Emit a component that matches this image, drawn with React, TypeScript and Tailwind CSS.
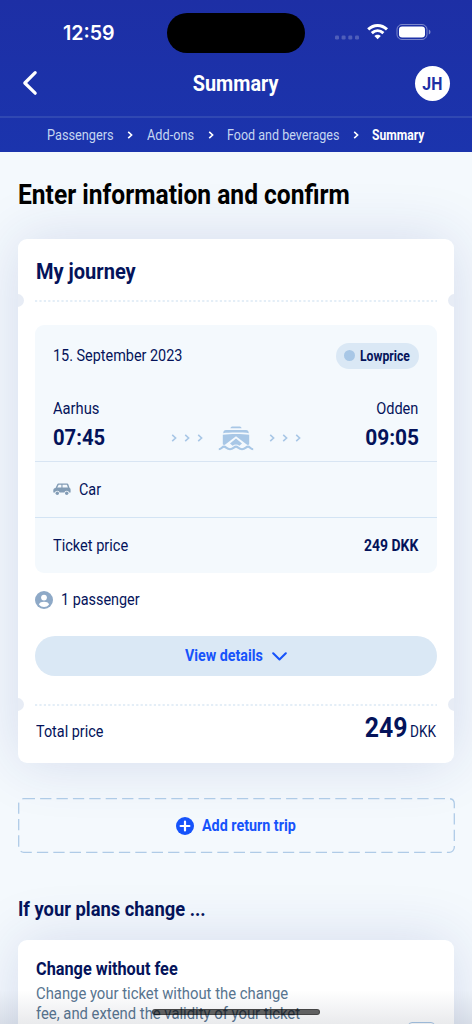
import type { ReactNode } from 'react';

// Thin chevron used between breadcrumb steps and along the route
function Caret({ className = '' }: { className?: string }) {
  return (
    <svg className={className} width="6" height="8" viewBox="0 0 6 8" fill="none" stroke="currentColor" strokeWidth="1.6">
      <path d="M1.2 0.9L4.6 4L1.2 7.1" />
    </svg>
  );
}

function Carets() {
  return (
    <div className="flex gap-[7px] text-[#a8c7e6]">
      <Caret />
      <Caret />
      <Caret />
    </div>
  );
}

function Ferry() {
  return (
    <svg width="36" height="25" viewBox="0 0 36 25" fill="#a8c7e6">
      <path d="M12.4 2.2C13 1 13.8 0.6 15 0.6H21C22.2 0.6 23 1 23.6 2.2Z" />
      <path d="M5.2 7.2C5.4 4.8 6.2 4 8 4H28C29.8 4 30.6 4.8 30.8 7.2C26 6.4 10 6.4 5.2 7.2Z" />
      <path d="M4.8 8.8C12 7.7 24 7.7 31.2 8.8V18.2C30.4 19.2 29.4 19 28.4 18.3L18 10.2L7.6 18.3C6.6 19 5.6 19.2 4.8 18.2Z" />
      <path d="M18 12.4L24 17.4L21.4 19.8C19.6 18.2 16.4 18.2 14.6 19.8L12 17.4Z" />
      <path
        d="M0.8 23.2C3.6 23.2 4 20.6 6 20.6S8.6 23.2 12 23.2S16 20.6 18 20.6S20.6 23.2 24 23.2S28 20.6 30 20.6S32.4 23.2 35.2 23.2"
        fill="none"
        stroke="#a8c7e6"
        strokeWidth="2.1"
      />
    </svg>
  );
}

function Car() {
  return (
    <svg width="18" height="13" viewBox="0 0 18 13" fill="#829cb5">
      <path
        fillRule="evenodd"
        d="M5.8 0.6H14.1C14.8 0.6 15.2 1 15.4 1.6L16.5 4.7C17.3 5.2 17.6 5.8 17.6 6.8V9.4H0.3V7.2C0.3 5.8 1 5.2 2.5 4.9L4.1 1.7C4.5 0.9 5 0.6 5.8 0.6ZM5.7 1.8L4.2 4.6H8.4V1.8ZM9.5 1.8V4.6H14.9L13.9 1.8Z"
      />
      <circle cx="4.3" cy="10" r="2.3" fill="#f4f9fd" />
      <circle cx="13.7" cy="10" r="2.3" fill="#f4f9fd" />
      <circle cx="4.3" cy="10.2" r="1.7" />
      <circle cx="13.7" cy="10.2" r="1.7" />
    </svg>
  );
}

function Person() {
  return (
    <svg width="18" height="18" viewBox="0 0 18 18">
      <circle cx="9" cy="9" r="9" fill="#8ea9c7" />
      <circle cx="9" cy="6.6" r="2.9" fill="#fff" />
      <path d="M3.9 13.6C4.4 11.4 6.6 10.8 9 10.8S13.6 11.4 14.1 13.6C12.8 15.3 11 16.1 9 16.1S5.2 15.3 3.9 13.6Z" fill="#fff" />
    </svg>
  );
}

// Dotted tear line with a notch cut out of each card edge
function TearLine() {
  return (
    <div className="flex h-[13px] items-center justify-between overflow-hidden">
      <div className="-ml-[7px] size-[13px] rounded-full bg-[#e7ecf5]" />
      <svg width="402" height="2" className="shrink-0">
        <line x1="0" y1="1" x2="402" y2="1" stroke="#e4eef7" strokeWidth="2" strokeDasharray="2.2 2.2" />
      </svg>
      <div className="-mr-[7px] size-[13px] rounded-full bg-[#e7ecf5]" />
    </div>
  );
}

function Card({ className, children }: { className: string; children: ReactNode }) {
  return (
    <section className={`mx-[18px] rounded-[9px] bg-white shadow-[0_0_58px_rgba(35,50,140,0.15)] ${className}`}>
      {children}
    </section>
  );
}

export default function App() {
  return (
    <main className="relative h-[1024px] w-[472px] overflow-hidden bg-[#f4f9fd] font-['Roboto',sans-serif] text-[16px] leading-[20px] text-[#04135a]">
      <header className="relative z-10 h-[152px] bg-linear-to-b from-[#1d2fa5] to-[#1b34ad] text-white">
        <div className="flex h-[60px] items-start">
          <div className="mt-[20px] ml-[63px] w-[104px] font-['Inter',sans-serif] text-[20px] leading-[26px] font-semibold">
            <span className="inline-block origin-left scale-x-[0.98]">12:59</span>
          </div>
          <div className="mt-[13px] h-[40px] w-[138px] rounded-full bg-black" />
          <svg className="mt-[23px] ml-[30px]" width="97" height="18" viewBox="0 0 97 18" fill="none">
            <g fill="#fff" opacity="0.22">
              <rect x="0" y="12.5" width="4" height="4" rx="1.2" />
              <rect x="6.6" y="12.5" width="4" height="4" rx="1.2" />
              <rect x="13.3" y="12.5" width="4" height="4" rx="1.2" />
              <rect x="20" y="12.5" width="4" height="4" rx="1.2" />
            </g>
            <g stroke="#fff" strokeWidth="3">
              <path d="M33.2 6.4C38.8 1.1 46.4 1.1 52 6.4" />
              <path d="M36.8 10.1C40.3 6.9 44.9 6.9 48.4 10.1" />
            </g>
            <path d="M42.6 16.3L39.4 13C41.1 11.2 44.1 11.2 45.8 13Z" fill="#fff" />
            <rect x="62" y="1.5" width="30" height="15" rx="5" stroke="#fff" strokeOpacity="0.42" />
            <rect x="64" y="3.5" width="26" height="11" rx="3.2" fill="#fff" />
            <path d="M93.8 6.5C96 7.5 96 10.5 93.8 11.5Z" fill="#fff" fillOpacity="0.45" />
          </svg>
        </div>
        <div className="flex h-[58px] items-start justify-between border-b-2 border-[#3048b2] px-[22px]">
          <svg className="mt-[10px]" width="35" height="26" viewBox="0 0 35 26" fill="none" stroke="#fff" strokeWidth="3.2" strokeLinecap="round" strokeLinejoin="round">
            <path d="M13.2 2.6L2.8 13L13.2 23.2" />
          </svg>
          <h1 className="mt-[10px] text-[22.5px] leading-[26px] font-bold">
            <span className="inline-block scale-x-[0.88]">Summary</span>
          </h1>
          <div className="mt-[6px] flex size-[35px] items-center justify-center rounded-full bg-white text-[18px] font-bold text-[#1d2fa5]">
            <span className="scale-x-[0.88]">JH</span>
          </div>
        </div>
        <nav className="flex h-[34px] items-center pl-[47px] text-[14px]">
          <div className="flex w-[100px] items-center text-[#c5d6f1]">
            <span className="w-[80px] origin-left scale-x-[0.91]">Passengers</span>
            <Caret className="text-white" />
          </div>
          <div className="flex w-[80px] items-center text-[#c5d6f1]">
            <span className="w-[61px] origin-left scale-x-[0.91]">Add-ons</span>
            <Caret className="text-white" />
          </div>
          <div className="flex w-[145px] items-center text-[#c5d6f1]">
            <span className="w-[126px] origin-left scale-x-[0.895] whitespace-nowrap">Food and beverages</span>
            <Caret className="text-white" />
          </div>
          <span className="origin-left scale-x-[0.865] font-bold">Summary</span>
        </nav>
      </header>

      <h2 className="mt-[27px] ml-[18px] h-[60px] text-[27px] leading-[32px] font-bold text-black">
        <span className="inline-block origin-left scale-x-[0.91]">Enter information and confirm</span>
      </h2>

      <Card className="h-[524px]">
        <h3 className="h-[55px] pt-[18px] pl-[18px] text-[22.5px] leading-[28px] font-bold">
          <span className="inline-block origin-left scale-x-[0.89]">My journey</span>
        </h3>
        <TearLine />
        <div className="mx-[17px] mt-[18px] h-[248px] rounded-[9px] bg-[#f4f9fd]">
          <div className="h-[137px] border-b border-[#d8e5f3] px-[18px] pt-[17px]">
            <div className="flex h-[27px] items-center justify-between">
              <span className="origin-left scale-x-[0.9]">15. September 2023</span>
              <div className="flex h-[26px] w-[83px] items-center gap-[5px] rounded-full bg-[#dae8f5] pl-[8px] text-[14px] font-bold">
                <span className="size-[11px] shrink-0 rounded-full bg-[#a8c7e6]" />
                <span className="origin-left scale-x-[0.87]">Lowprice</span>
              </div>
            </div>
            <div className="mt-[30px] flex justify-between">
              <span className="origin-left scale-x-[0.92]">Aarhus</span>
              <span className="mr-px origin-right scale-x-[0.91]">Odden</span>
            </div>
            <div className="mt-[5px] flex items-center justify-between text-[22px] leading-[28px] font-bold">
              <span className="w-[66px] origin-left scale-x-[0.92]">07:45</span>
              <div className="flex items-center gap-[15px]">
                <Carets />
                <Ferry />
                <Carets />
              </div>
              <span className="w-[66px] origin-right scale-x-[0.95] text-right">09:05</span>
            </div>
          </div>
          <div className="flex h-[56px] items-center gap-[8px] border-b border-[#d3e4f4] px-[18px]">
            <Car />
            <span className="origin-left scale-x-[0.9]">Car</span>
          </div>
          <div className="flex h-[55px] items-center justify-between px-[18px]">
            <span className="origin-left scale-x-[0.91]">Ticket price</span>
            <span className="mr-px origin-right scale-x-[0.87] font-bold">249 DKK</span>
          </div>
        </div>
        <div className="mt-[17px] ml-[17px] flex items-center gap-[8px]">
          <Person />
          <span className="origin-left scale-x-[0.9]">1 passenger</span>
        </div>
        <button className="mt-[26px] ml-[17px] flex h-[40px] w-[402px] items-center justify-center gap-[8px] rounded-full bg-[#dae8f5] font-bold text-[#1653fb]">
          <span className="w-[79px] origin-left scale-x-[0.89] text-left whitespace-nowrap">View details</span>
          <svg width="15" height="9" viewBox="0 0 15 9" fill="none" stroke="currentColor" strokeWidth="2.1" strokeLinecap="round" strokeLinejoin="round">
            <path d="M1.2 1.3L7.5 7.4L13.8 1.3" />
          </svg>
        </button>
        <div className="mt-[22px]">
          <TearLine />
        </div>
        <div className="flex items-baseline justify-between px-[18px] pt-[1px]">
          <span className="origin-left scale-x-[0.9]">Total price</span>
          <span className="flex items-baseline gap-[3px]">
            <span className="origin-right scale-x-[0.92] text-[27px] leading-[32px] font-bold">249</span>
            <span className="w-[26px] origin-left scale-x-[0.85]">DKK</span>
          </span>
        </div>
      </Card>

      <button className="relative mt-[35px] ml-[18px] flex h-[55px] w-[437px] items-center justify-center gap-[8px] font-bold text-[#1653fb]">
        <svg className="absolute inset-0" width="437" height="55" fill="none">
          <rect x="0.7" y="0.7" width="435.6" height="53.6" rx="5" stroke="#afcbe7" strokeWidth="1.3" strokeDasharray="11.3 5.1" />
        </svg>
        <svg width="18" height="18" viewBox="0 0 18 18">
          <circle cx="9" cy="9" r="9" fill="#1653fb" />
          <path d="M9 4.6V13.4M4.6 9H13.4" stroke="#fff" strokeWidth="2.2" strokeLinecap="round" />
        </svg>
        <span className="w-[95px] origin-left scale-x-[0.895] text-left whitespace-nowrap">Add return trip</span>
      </button>

      <h2 className="mt-[43px] ml-[18px] h-[44px] text-[20.5px] leading-[26px] font-bold">
        <span className="inline-block origin-left scale-x-[0.895]">If your plans change ...</span>
      </h2>

      <Card className="h-[180px] px-[18px] pt-[18px]">
        <h3 className="text-[17.5px] leading-[23px] font-bold">
          <span className="inline-block origin-left scale-x-[0.93]">Change without fee</span>
        </h3>
        <div className="flex justify-between">
          <p className="mt-[3px] origin-left scale-x-[0.927] whitespace-nowrap text-[#587590]">
            Change your ticket without the change
            <br />
            fee, and extend the validity of your ticket
          </p>
          <div className="mt-[41px] mr-[1px] size-[27px] shrink-0 rounded-[4px] border border-[#a8c7e6]" />
        </div>
      </Card>

      <div className="absolute inset-x-0 bottom-0 h-[34px] bg-linear-to-b from-transparent to-[#26304a]/10" />
      <div className="absolute top-[1009px] left-[152px] h-[6px] w-[168px] rounded-full border border-black/30 bg-black/60" />
    </main>
  );
}
